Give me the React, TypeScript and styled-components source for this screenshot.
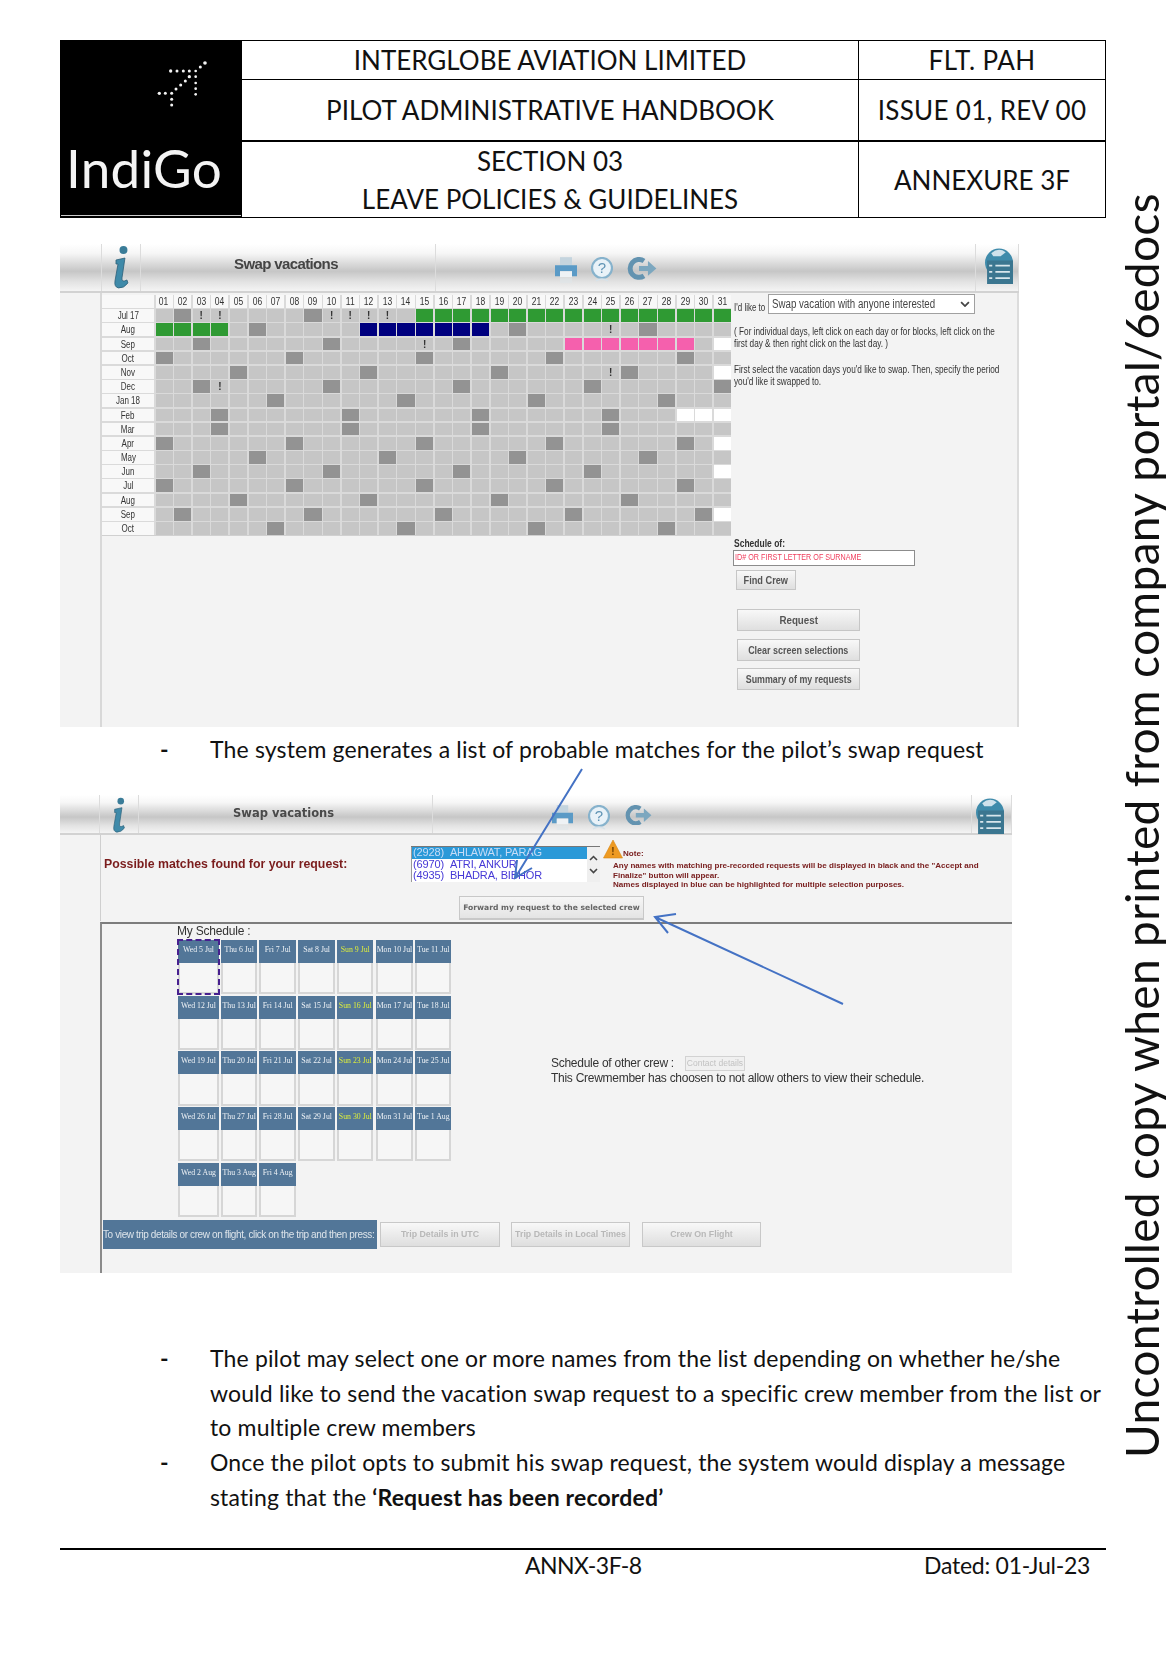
import React from 'react';
import styled, { createGlobalStyle } from 'styled-components';

const Global = createGlobalStyle`
  html, body { margin: 0; padding: 0; background: #fff; }
  * { box-sizing: border-box; }
`;

const Page = styled.div`
  position: relative;
  width: 1166px;
  height: 1654px;
  padding: 40px 0 0 60px;
  background: #fff;
  overflow: hidden;
  font-family: Lato, "Liberation Sans", sans-serif;
  color: #111;
`;

const HeaderTable = styled.div`
  display: grid;
  width: 1046px;
  height: 178px;
  grid-template-columns: 180px 617px 247px;
  grid-template-rows: 39px 62px 75px;
  border: 1px solid #000;
`;
const LogoCell = styled.div`
  grid-row: 1 / 4;
  background: #000;
  display: flex;
  flex-direction: column;
  padding: 10px 0 0 5px;
  border-bottom: 1px solid #000;
  box-shadow: inset 0 -2px 0 -1px #ccc;
`;
const PlaneMark = styled.svg`
  width: 90px;
  height: 70px;
  margin-left: 74px;
`;
const Wordmark = styled.div`
  margin-top: 25px;
  color: #f4f4f4;
  font-family: Lato, sans-serif;
  font-weight: 400;
  font-size: 53px;
  line-height: 44px;
  letter-spacing: 0.3px;
`;
const HeadCell = styled.div<{ $thick?: boolean; $last?: boolean; $ls?: number }>`
  display: flex;
  flex-direction: column;
  align-items: center;
  justify-content: center;
  border-left: 1px solid #000;
  border-bottom: ${p => (p.$last ? '0' : p.$thick ? '2px solid #000' : '1px solid #000')};
  font-size: 26px;
  line-height: 38px;
  letter-spacing: ${p => p.$ls ?? 0}px;
  white-space: nowrap;
`;

const Shot = styled.div<{ $w: number; $h: number; $top: number }>`
  display: flex;
  flex-direction: column;
  width: ${p => p.$w}px;
  height: ${p => p.$h}px;
  margin-top: ${p => p.$top}px;
  background: #f3f3f3;
  filter: blur(0.45px);
  font-family: "Liberation Sans", Arial, sans-serif;
  color: #333;
`;
const Band = styled.div<{ $h: number }>`
  display: flex;
  flex: none;
  height: ${p => p.$h}px;
  background: linear-gradient(180deg, #ffffff 0%, #f6f6f6 20%, #c6c6c6 58%, #e2e2e2 80%, #f4f4f4 100%);
  border-bottom: 2px solid #d2d2d2;
`;
const BandCell = styled.div<{ $w?: number }>`
  flex: ${p => (p.$w ? 'none' : '1')};
  width: ${p => (p.$w ? `${p.$w}px` : 'auto')};
  display: flex;
  align-items: flex-start;
  border-right: 1px solid #dcdcdc;
  position: relative;
`;
const TitleBox = styled(BandCell)<{ $pad: number }>`
  padding-left: ${p => p.$pad}px;
  align-items: center;
`;
const TitleNarrow = styled.div`
  font-weight: 700;
  font-size: 15px;
  letter-spacing: -0.62px;
  color: #444;
  margin-top: -9px;
`;
const TitleWide = styled.div`
  font-family: "DejaVu Sans", sans-serif;
  font-weight: 700;
  font-size: 11.5px;
  color: #4a4a4a;
  margin-top: -2px;
`;
const InfoIcon = styled.svg<{ $left: number; $top: number }>`
  margin: ${p => p.$top}px 0 0 ${p => p.$left}px;
`;
const ToolRow = styled.div<{ $left: number; $top: number; $gap: number }>`
  display: flex;
  gap: ${p => p.$gap}px;
  padding: ${p => p.$top}px 0 0 ${p => p.$left}px;
`;

const BodyRow = styled.div`
  flex: 1;
  display: flex;
  min-height: 0;
`;
const Gutter = styled.div<{ $w: number }>`
  flex: none;
  width: ${p => p.$w}px;
  border-right: 2px solid #d8d8d8;
`;
const PlainGutter = styled.div`
  flex: none;
  width: 40px;
`;
const Work = styled.div`
  flex: 1;
  min-width: 0;
  display: flex;
  border-right: 2px solid #dcdcdc;
  padding-top: 2px;
`;
const Cal = styled.div`
  flex: none;
  width: 629px;
  height: 241px;
  display: grid;
  grid-template-columns: 52px repeat(31, 1fr);
  grid-auto-rows: 12.7px;
  gap: 1.5px;
  background: #dadada;
  border-bottom: 1px solid #d0d0d0;
`;
const Squeeze = styled.span<{ $x: number }>`
  display: inline-block;
  white-space: nowrap;
  transform: scaleX(${p => p.$x});
  transform-origin: left center;
`;
const MidSqueeze = styled(Squeeze)`
  transform-origin: center center;
`;
const CalLabel = styled.div`
  background: #f8f8f8;
  font-size: 10px;
  line-height: 13px;
  text-align: center;
  color: #333;
`;
const CELL: Record<string, string> = {
  n: '#c6c6c6', d: '#939393', g: '#2f9a33', b: '#00007f', p: '#f560ad', w: '#ffffff',
};
const CalCell = styled.div<{ $k: string }>`
  background: ${p => CELL[p.$k]};
  font-size: 10px;
  font-weight: 700;
  line-height: 13px;
  text-align: center;
  color: #333;
`;

const SidePanel = styled.div`
  flex: 1;
  min-width: 0;
  display: flex;
  flex-direction: column;
  padding: 0 0 0 3px;
  font-size: 10.5px;
  line-height: 12px;
  margin-top: -1px;
`;
const LikeRow = styled.div`
  display: flex;
  align-items: flex-end;
  height: 20px;
`;
const LikeLabel = styled.div`
  width: 34px;
  padding-bottom: 1px;
`;
const SelectBox = styled.div`
  flex: none;
  width: 207px;
  height: 20px;
  background: #fff;
  border: 1px solid #a0a0a0;
  display: flex;
  align-items: center;
  padding: 0 4px 0 3px;
  font-size: 12px;
  color: #444;
`;
const SelectText = styled.div`
  flex: 1;
  width: 0;
`;
const Hint = styled.div<{ $top: number }>`
  margin-top: ${p => p.$top}px;
  height: 24px;
  color: #333;
`;
const HintLine = styled.div``;
const SchedLabel = styled.div`
  margin-top: 151px;
  font-weight: 700;
  font-size: 10px;
`;
const CrewInput = styled.div`
  width: 182px;
  height: 16px;
  margin: 0 0 0 -1px;
  background: #fff;
  border: 1.5px solid #8c8c8c;
  padding-left: 1px;
  font-size: 9px;
  line-height: 13px;
  color: #ef3d5c;
  overflow: hidden;
`;
const PanelBtn = styled.div<{ $w: number; $h: number; $top: number; $left: number }>`
  width: ${p => p.$w}px;
  height: ${p => p.$h}px;
  margin: ${p => p.$top}px 0 0 ${p => p.$left}px;
  display: flex;
  align-items: center;
  justify-content: center;
  background: linear-gradient(180deg, #f8f8f8, #dfdfdf);
  border: 1.5px solid #c6c6c6;
  font-size: 11.5px;
  font-weight: 700;
  color: #555;
`;

const Bullet = styled.div<{ $top: number }>`
  display: grid;
  grid-template-columns: 50px 1fr;
  margin-top: ${p => p.$top}px;
  padding-left: 100px;
  font-size: 23px;
  line-height: 34.8px;
  letter-spacing: 0.16px;
  color: #111;
  white-space: nowrap;
`;
const BulletDash = styled.div`
  font-weight: 700;
`;
const BulletText = styled.div``;
const Strong = styled.strong`
  font-weight: 700;
`;

const MatchColumn = styled.div`
  flex: 1;
  min-width: 0;
  display: flex;
  flex-direction: column;
`;
const MatchTop = styled.div`
  flex: none;
  height: 86px;
  display: flex;
  flex-direction: column;
  border-left: 1px solid #cfcfcf;
`;
const MatchRow = styled.div`
  height: 61px;
  display: flex;
  padding-left: 3px;
`;
const MatchLabel = styled.div`
  flex: none;
  width: 307px;
  padding-top: 22px;
  font-size: 12.3px;
  font-weight: 700;
  line-height: 14px;
  color: #7a1c1c;
  white-space: nowrap;
`;
const CrewList = styled.div`
  flex: none;
  width: 189px;
  height: 36px;
  margin-top: 11px;
  display: flex;
  background: #fff;
  border-top: 1px solid #777;
`;
const CrewNames = styled.div`
  flex: 1;
  font-size: 11px;
  line-height: 11px;
  letter-spacing: -0.15px;
  color: #4538d6;
`;
const CrewName = styled.div<{ $on?: boolean }>`
  display: flex;
  gap: 6px;
  height: 11.8px;
  padding-left: 1px;
  background: ${p => (p.$on ? '#2a99d8' : 'transparent')};
  color: ${p => (p.$on ? '#c7dcf7' : 'inherit')};
  border-left: 1px solid #999;
  white-space: nowrap;
`;
const Scroller = styled.div`
  flex: none;
  width: 13px;
  background: #efefef;
  display: flex;
  flex-direction: column;
  align-items: center;
  justify-content: space-around;
  padding: 4px 0;
`;
const NoteBlock = styled.div`
  flex: none;
  margin: 2px 0 0 3px;
  color: #7a2020;
  font-size: 8.05px;
  font-weight: 700;
  line-height: 9.8px;
  white-space: nowrap;
`;
const NoteHead = styled.div`
  display: flex;
  align-items: flex-end;
  height: 22px;
`;
const NoteLines = styled.div`
  margin: 2px 0 0 10px;
`;
const ForwardRow = styled.div`
  height: 24px;
  padding-left: 358px;
`;
const ForwardBtn = styled.div`
  width: 185px;
  height: 24px;
  display: flex;
  align-items: center;
  justify-content: center;
  background: linear-gradient(180deg, #f6f6f6, #e4e4e4);
  border: 1px solid #c8c8c8;
  border-bottom-width: 2px;
  font-family: "DejaVu Sans", sans-serif;
  font-size: 7.6px;
  font-weight: 700;
  color: #666;
  white-space: nowrap;
`;
const ScheduleBox = styled.div`
  flex: 1;
  display: flex;
  flex-direction: column;
  border-top: 2px solid #7c7c7c;
  border-left: 2px solid #8a8a8a;
  margin-top: 1px;
`;
const ScheduleTop = styled.div`
  display: flex;
  height: 296px;
`;
const ScheduleLeft = styled.div`
  flex: none;
  width: 449px;
  padding-left: 76px;
`;
const MyLabel = styled.div`
  height: 16px;
  margin-left: -1px;
  font-size: 12px;
  line-height: 14px;
  letter-spacing: -0.2px;
`;
const Calendar = styled.div`
  display: grid;
  grid-template-columns: 41px 36px 36.7px 36.7px 36.3px 37.7px 35.7px;
  grid-auto-rows: 54.2px;
  gap: 1.6px 2.2px;
`;
const Day = styled.div<{ $focus?: boolean }>`
  display: flex;
  flex-direction: column;
  outline: ${p => (p.$focus ? '2px dashed #47208f' : 'none')};
  outline-offset: -1px;
`;
const DayHead = styled.div<{ $sun?: boolean }>`
  flex: none;
  height: 23px;
  background: #527698;
  color: ${p => (p.$sun ? '#dcec3c' : '#eef2f6')};
  font-family: "Liberation Serif", serif;
  font-size: 7.8px;
  line-height: 20px;
  text-align: center;
  white-space: nowrap;
`;
const DayBody = styled.div`
  flex: 1;
  background: #f6f6f6;
  border: 2px solid #d6d6d6;
  border-top: 0;
`;
const OtherCrew = styled.div`
  padding-top: 132px;
  font-size: 12px;
  line-height: 15px;
  letter-spacing: -0.27px;
  color: #333;
  white-space: nowrap;
`;
const OtherHead = styled.div`
  display: flex;
  align-items: center;
  gap: 11px;
`;
const ContactBtn = styled.div`
  width: 60px;
  height: 15px;
  display: flex;
  align-items: center;
  justify-content: center;
  background: #f0f0f0;
  border: 1px solid #d2d2d2;
  font-size: 8.5px;
  letter-spacing: 0;
  color: #c2c2c2;
`;
const TripBar = styled.div`
  display: flex;
  align-items: center;
  padding-left: 1px;
  height: 29px;
`;
const TripInfo = styled.div`
  flex: none;
  width: 274px;
  height: 29px;
  background: #527698;
  color: #dde4ea;
  font-size: 10px;
  line-height: 29px;
  letter-spacing: -0.38px;
  white-space: nowrap;
`;
const TripBtn = styled.div<{ $w: number; $left: number }>`
  flex: none;
  width: ${p => p.$w}px;
  height: 25px;
  margin-left: ${p => p.$left}px;
  display: flex;
  align-items: center;
  justify-content: center;
  background: linear-gradient(180deg, #f8f8f8, #dedede);
  border: 1.5px solid #c8c8c8;
  font-size: 8.8px;
  font-weight: 700;
  color: #b8b8b8;
  white-space: nowrap;
`;

const Footer = styled.div`
  margin-top: 33px;
  width: 1046px;
  border-top: 2px solid #000;
  display: grid;
  grid-template-columns: 465px 399px 1fr;
  font-size: 23px;
  line-height: 30px;
`;
const Spacer = styled.div``;
const FooterItem = styled.div<{ $ls: number }>`
  white-space: nowrap;
  letter-spacing: ${p => p.$ls}px;
`;
const Watermark = styled.div`
  position: absolute;
  top: 188px;
  left: 1120px;
  height: 1270px;
  writing-mode: vertical-rl;
  transform: rotate(180deg);
  font-size: 46px;
  line-height: 44px;
  letter-spacing: 0.33px;
  color: #111;
  white-space: nowrap;
  text-align: left;
`;
const ArrowLayer = styled.svg`
  position: absolute;
  top: 0;
  left: 0;
  width: 1166px;
  height: 1654px;
  pointer-events: none;
`;

const PLANE: [number, number, number][] = [
  [195, 36, 5.5], [181, 48, 4.5], [167, 60, 4], [148, 77, 5], [136, 90, 4.5], [122, 102, 4.5], [108, 114, 4.5], [95, 127, 4.5],
  [92, 60, 5], [111, 60, 4.5], [130, 60, 4.5], [148, 60, 4.5], [167, 77, 4], [167, 96, 4], [167, 113, 4], [167, 130, 4],
  [58, 127, 5], [76, 127, 4.5], [95, 145, 4.5], [95, 162, 4.5],
];

const Info = ({ left, top, h }: { left: number; top: number; h: number }) => (
  <InfoIcon $left={left} $top={top} width={h * 0.34} height={h} viewBox="0 0 15 44">
    <circle cx="9.5" cy="5" r="4" fill="#3a7c98" />
    <path d="M2 15 L11 13 L8 33 Q7.5 38 13 35 L14 38 Q10 43.5 4.5 43 Q0 42 1 36 L4 19 L2 19 Z" fill="#3f8aa9" stroke="#2d5f78" strokeWidth="0.8" />
  </InfoIcon>
);

const Printer = ({ w }: { w: number }) => (
  <svg width={w} height={w * 1.2} viewBox="0 0 22 26">
    <rect x="5" y="0" width="12" height="9" fill="#c4d4de" />
    <path d="M0 8 H22 V19 H17 V14 H5 V19 H0 Z" fill="#5a9ac6" />
    <rect x="5" y="14" width="12" height="6" fill="#eef2f5" />
    <rect x="5" y="21" width="12" height="5" fill="#dfe6ea" opacity="0.6" />
  </svg>
);
const Help = ({ w }: { w: number }) => (
  <svg width={w} height={w * 1.2} viewBox="0 0 22 26.4">
    <ellipse cx="11" cy="11" rx="10" ry="10" fill="#e9f2f8" stroke="#86b2cc" strokeWidth="2.2" />
    <text x="11" y="16.5" textAnchor="middle" fontSize="15" fontFamily="Liberation Sans, sans-serif" fill="#5f93b4">?</text>
    <path d="M5 24 Q11 20 17 24" fill="none" stroke="#d6e2ea" strokeWidth="1.4" />
  </svg>
);
const Leave = ({ w }: { w: number }) => (
  <svg width={w} height={w * 0.76} viewBox="0 0 30 23">
    <path d="M17 4 A9 9 0 1 0 17 19" fill="none" stroke="#6393b0" strokeWidth="5" />
    <path d="M12 9 H21 V4 L29.5 11.5 L21 19 V14 H12 Z" fill="#7ca7bf" />
  </svg>
);
const Profile = ({ w }: { w: number }) => (
  <svg width={w} height={w * 1.3} viewBox="0 0 27 35">
    <circle cx="13.5" cy="14" r="13.5" fill="#3f8bab" />
    <path d="M6 5 Q13 -1 20 4 L15 8 L8 8 Z" fill="#cfe2ec" />
    <rect x="2" y="12" width="25" height="23" fill="#3b7690" />
    <g stroke="#d8e6ec" strokeWidth="1.6">
      <path d="M10 17 H24 M10 23 H24 M10 29 H24" />
      <path d="M4 17 H7 M4 23 H7 M4 29 H7" />
    </g>
  </svg>
);
const Chevron = ({ up, w = 9 }: { up?: boolean; w?: number }) => (
  <svg width={w} height={w * 0.67} viewBox="0 0 9 6">
    <path d={up ? 'M1 5 L4.5 1.5 L8 5' : 'M1 1 L4.5 4.5 L8 1'} fill="none" stroke="#444" strokeWidth="1.6" />
  </svg>
);

const MONTHS = ['Jul 17', 'Aug', 'Sep', 'Oct', 'Nov', 'Dec', 'Jan 18', 'Feb', 'Mar', 'Apr', 'May', 'Jun', 'Jul', 'Aug', 'Sep', 'Oct'];
const DARK: number[][] = [
  [2, 9], [6, 20, 27], [3, 10, 17], [1, 8, 15, 22, 29], [5, 12, 19, 26], [3, 10, 17, 24, 31], [7, 14, 21, 28], [4, 11, 18, 25],
  [4, 11, 18, 25], [1, 8, 15, 22, 29], [6, 13, 20, 27], [3, 10, 17, 24], [1, 8, 15, 22, 29], [5, 12, 19, 26], [2, 9, 16, 23, 30], [7, 14, 21, 28],
];
const BANG: number[][] = [[3, 4, 10, 11, 12, 13], [25], [15], [], [25], [4], [], [], [], [], [], [], [], [], [], []];
const WHITE: number[][] = [[], [], [31], [], [31], [], [], [29, 30, 31], [], [31], [], [31], [], [], [31], []];

const kindOf = (r: number, d: number): string => {
  if (r === 0 && d >= 15) return 'g';
  if (r === 1 && d <= 4) return 'g';
  if (r === 1 && d >= 12 && d <= 18) return 'b';
  if (r === 2 && d >= 23 && d <= 29) return 'p';
  if (WHITE[r].includes(d)) return 'w';
  if (DARK[r].includes(d)) return 'd';
  return 'n';
};
const DAYS = Array.from({ length: 31 }, (_, i) => i + 1);
const two = (n: number) => String(n).padStart(2, '0');
const NAMES = ['Wed', 'Thu', 'Fri', 'Sat', 'Sun', 'Mon', 'Tue'];
const SCHEDULE = Array.from({ length: 31 }, (_, i) => {
  const n = i + 5;
  const label = n > 31 ? `${n - 31} Aug` : `${n} Jul`;
  return { key: i, name: NAMES[i % 7], label };
});

export default function App() {
  return (
    <Page>
      <Global />
      <HeaderTable>
        <LogoCell>
          <PlaneMark viewBox="0 0 90 70">
            {PLANE.map(([x, y, r], i) => (
              <circle key={i} cx={x / 3} cy={y / 3} r={r / 3} fill="#f2f2f2" />
            ))}
          </PlaneMark>
          <Wordmark>IndiGo</Wordmark>
        </LogoCell>
        <HeadCell>INTERGLOBE AVIATION LIMITED</HeadCell>
        <HeadCell $ls={0.4}>FLT. PAH</HeadCell>
        <HeadCell $thick>PILOT ADMINISTRATIVE HANDBOOK</HeadCell>
        <HeadCell $thick $ls={0.3}>ISSUE 01, REV 00</HeadCell>
        <HeadCell $last>
          <div>SECTION 03</div>
          <div>LEAVE POLICIES &amp; GUIDELINES</div>
        </HeadCell>
        <HeadCell $last>ANNEXURE 3F</HeadCell>
      </HeaderTable>

      <Shot $w={959} $h={483} $top={26}>
        <Band $h={49}>
          <BandCell $w={42} />
          <BandCell $w={39}><Info left={12} top={1} h={44} /></BandCell>
          <TitleBox $w={295} $pad={93}><TitleNarrow>Swap vacations</TitleNarrow></TitleBox>
          <BandCell>
            <ToolRow $left={119} $top={13} $gap={14}>
              <Printer w={22} />
              <Help w={22} />
              <Leave w={30} />
            </ToolRow>
          </BandCell>
          <BandCell $w={43}>
            <ToolRow $left={9} $top={4} $gap={0}><Profile w={28} /></ToolRow>
          </BandCell>
        </Band>
        <BodyRow>
          <Gutter $w={42} />
          <Work>
            <Cal>
              <CalLabel />
              {DAYS.map(d => (
                <CalLabel key={d}><MidSqueeze $x={0.85}>{two(d)}</MidSqueeze></CalLabel>
              ))}
              {MONTHS.map((m, r) => (
                <React.Fragment key={r}>
                  <CalLabel><MidSqueeze $x={0.8}>{m}</MidSqueeze></CalLabel>
                  {DAYS.map(d => (
                    <CalCell key={d} $k={kindOf(r, d)}>{BANG[r].includes(d) ? '!' : ''}</CalCell>
                  ))}
                </React.Fragment>
              ))}
            </Cal>
            <SidePanel>
              <LikeRow>
                <LikeLabel><Squeeze $x={0.76}>I'd like to</Squeeze></LikeLabel>
                <SelectBox>
                  <SelectText><Squeeze $x={0.81}>Swap vacation with anyone interested</Squeeze></SelectText>
                  <Chevron w={10} />
                </SelectBox>
              </LikeRow>
              <Hint $top={11}>
                <HintLine><Squeeze $x={0.784}>( For individual days, left click on each day or for blocks, left click on the</Squeeze></HintLine>
                <HintLine><Squeeze $x={0.784}>first day &amp; then right click on the last day. )</Squeeze></HintLine>
              </Hint>
              <Hint $top={14}>
                <HintLine><Squeeze $x={0.784}>First select the vacation days you'd like to swap. Then, specify the period</Squeeze></HintLine>
                <HintLine><Squeeze $x={0.784}>you'd like it swapped to.</Squeeze></HintLine>
              </Hint>
              <SchedLabel><Squeeze $x={0.85}>Schedule of:</Squeeze></SchedLabel>
              <CrewInput><Squeeze $x={0.8}>ID# OR FIRST LETTER OF SURNAME</Squeeze></CrewInput>
              <PanelBtn $w={60} $h={20} $top={4} $left={2}><MidSqueeze $x={0.8}>Find Crew</MidSqueeze></PanelBtn>
              <PanelBtn $w={123} $h={22} $top={19} $left={3}><MidSqueeze $x={0.85}>Request</MidSqueeze></PanelBtn>
              <PanelBtn $w={123} $h={22} $top={8} $left={3}><MidSqueeze $x={0.78}>Clear screen selections</MidSqueeze></PanelBtn>
              <PanelBtn $w={123} $h={22} $top={7} $left={3}><MidSqueeze $x={0.77}>Summary of my requests</MidSqueeze></PanelBtn>
            </SidePanel>
          </Work>
        </BodyRow>
      </Shot>

      <Bullet $top={5}>
        <BulletDash>-</BulletDash>
        <BulletText>The system generates a list of probable matches for the pilot’s swap request</BulletText>
      </Bullet>

      <Shot $w={952} $h={478} $top={28}>
        <Band $h={40}>
          <BandCell $w={40} />
          <BandCell $w={39}><Info left={13} top={2} h={36} /></BandCell>
          <TitleBox $w={294} $pad={94}><TitleWide>Swap vacations</TitleWide></TitleBox>
          <BandCell>
            <ToolRow $left={119} $top={10} $gap={15}>
              <Printer w={21} />
              <Help w={22} />
              <Leave w={27} />
            </ToolRow>
          </BandCell>
          <BandCell $w={40}>
            <ToolRow $left={4} $top={3} $gap={0}><Profile w={28} /></ToolRow>
          </BandCell>
        </Band>
        <BodyRow>
          <PlainGutter />
          <MatchColumn>
            <MatchTop>
              <MatchRow>
                <MatchLabel>Possible matches found for your request:</MatchLabel>
                <CrewList>
                  <CrewNames>
                    <CrewName $on><span>(2928)</span><span>AHLAWAT, PARAG</span></CrewName>
                    <CrewName><span>(6970)</span><span>ATRI, ANKUR</span></CrewName>
                    <CrewName><span>(4935)</span><span>BHADRA, BIBHOR</span></CrewName>
                  </CrewNames>
                  <Scroller><Chevron up /><Chevron /></Scroller>
                </CrewList>
                <NoteBlock>
                  <NoteHead>
                    <svg width="20" height="20" viewBox="0 0 20 20">
                      <path d="M10 1 L19.5 19 H0.5 Z" fill="#ee9a22" stroke="#d98612" strokeWidth="0.6" />
                      <text x="10" y="16" textAnchor="middle" fontSize="10" fontFamily="Liberation Sans, sans-serif" fontWeight="700" fill="#6b3c00">!</text>
                    </svg>
                    <span>Note:</span>
                  </NoteHead>
                  <NoteLines>
                    <div>Any names with matching pre-recorded requests will be displayed in black and the "Accept and</div>
                    <div>Finalize" button will appear.</div>
                    <div>Names displayed in blue can be highlighted for multiple selection purposes.</div>
                  </NoteLines>
                </NoteBlock>
              </MatchRow>
              <ForwardRow>
                <ForwardBtn>Forward my request to the selected crew</ForwardBtn>
              </ForwardRow>
            </MatchTop>
            <ScheduleBox>
              <ScheduleTop>
                <ScheduleLeft>
                  <MyLabel>My Schedule :</MyLabel>
                  <Calendar>
                    {SCHEDULE.map(d => (
                      <Day key={d.key} $focus={d.key === 0}>
                        <DayHead $sun={d.name === 'Sun'}>{d.name} {d.label}</DayHead>
                        <DayBody />
                      </Day>
                    ))}
                  </Calendar>
                </ScheduleLeft>
                <OtherCrew>
                  <OtherHead>
                    <span>Schedule of other crew :</span>
                    <ContactBtn>Contact details</ContactBtn>
                  </OtherHead>
                  <div>This Crewmember has choosen to not allow others to view their schedule.</div>
                </OtherCrew>
              </ScheduleTop>
              <TripBar>
                <TripInfo>To view trip details or crew on flight, click on the trip and then press:</TripInfo>
                <TripBtn $w={120} $left={3}>Trip Details in UTC</TripBtn>
                <TripBtn $w={119} $left={11}>Trip Details in Local Times</TripBtn>
                <TripBtn $w={119} $left={12}>Crew On Flight</TripBtn>
              </TripBar>
            </ScheduleBox>
          </MatchColumn>
        </BodyRow>
      </Shot>

      <Bullet $top={68}>
        <BulletDash>-</BulletDash>
        <BulletText>
          The pilot may select one or more names from the list depending on whether he/she<br />
          would like to send the vacation swap request to a specific crew member from the list or<br />
          to multiple crew members
        </BulletText>
      </Bullet>
      <Bullet $top={0}>
        <BulletDash>-</BulletDash>
        <BulletText>
          Once the pilot opts to submit his swap request, the system would display a message<br />
          stating that the <Strong>‘Request has been recorded’</Strong>
        </BulletText>
      </Bullet>

      <Footer>
        <Spacer />
        <FooterItem $ls={-0.55}>ANNX-3F-8</FooterItem>
        <FooterItem $ls={-0.25}>Dated: 01-Jul-23</FooterItem>
      </Footer>

      <ArrowLayer viewBox="0 0 1166 1654">
        <g stroke="#4472c4" strokeWidth="2" fill="none">
          <path d="M582 769 L515 878 M532 868 L515 878 L517 860" />
          <path d="M843 1004 L655 917 M676 914 L655 917 L668 933" />
        </g>
      </ArrowLayer>

      <Watermark>Uncontrolled copy when printed from company portal/6edocs</Watermark>
    </Page>
  );
}
